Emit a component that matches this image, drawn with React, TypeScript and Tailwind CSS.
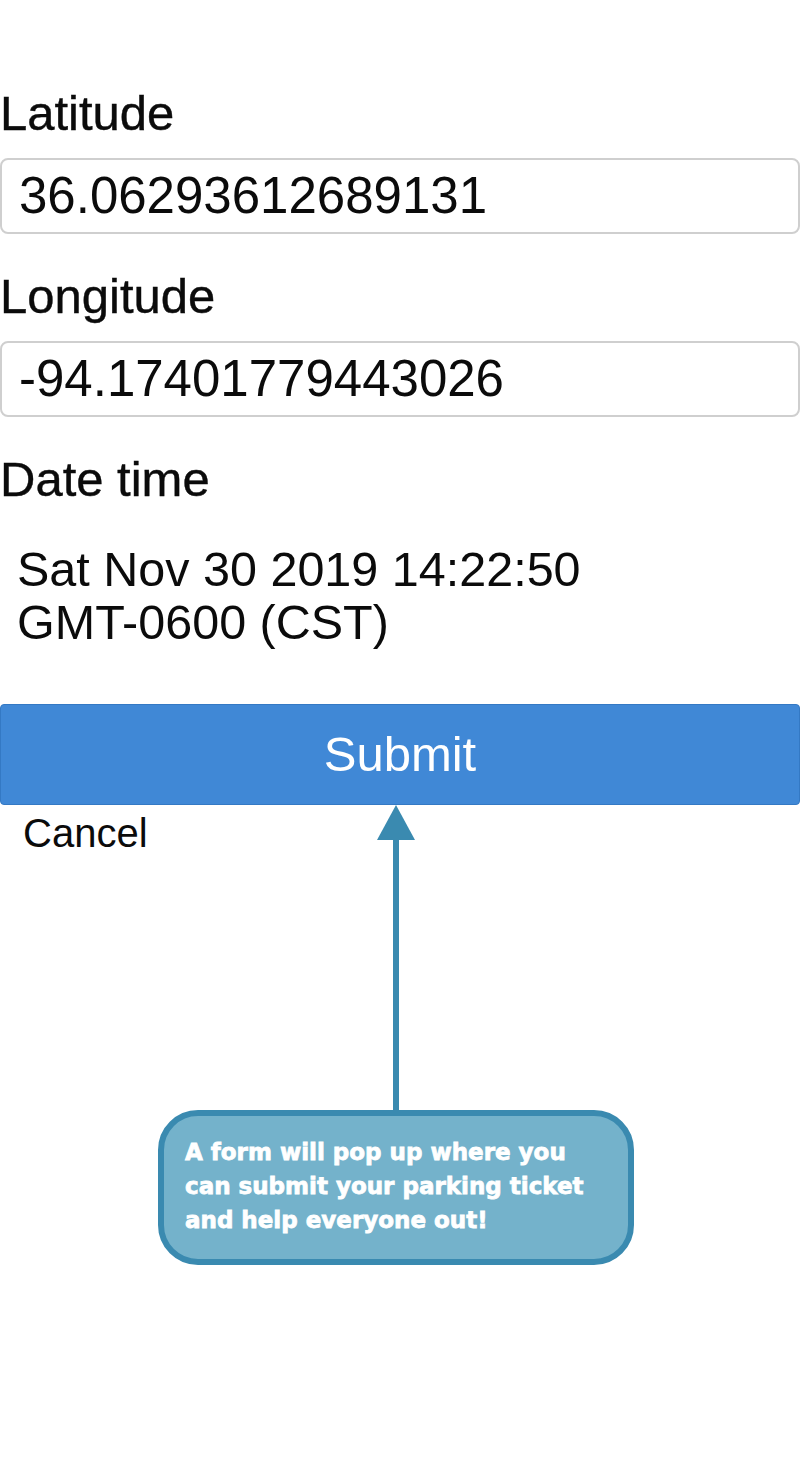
import React from "react";

function Field({ label, value }: { label: string; value: string }) {
  return (
    <div className="flex flex-col">
      <label className="text-[49px] leading-[56px] text-[#0b0b0b] mb-[17px] [-webkit-text-stroke:0.4px_#0b0b0b]">
        {label}
      </label>
      <div className="h-[76px] flex items-center pl-[17px] border-2 border-[#cfcfcf] rounded-[8px] bg-white text-[51px] text-[#0b0b0b]">
        {value}
      </div>
    </div>
  );
}

export default function App() {
  return (
    <div
      className="relative w-[800px] h-[1464px] bg-white overflow-hidden"
      style={{ fontFamily: '"Liberation Sans", Arial, sans-serif' }}
    >
      <div className="flex flex-col pt-[85px]">
        <Field label="Latitude" value="36.06293612689131" />
        <div className="mt-[34px]">
          <Field label="Longitude" value="-94.17401779443026" />
        </div>

        <div className="mt-[34px] text-[49px] leading-[56px] text-[#0b0b0b] [-webkit-text-stroke:0.4px_#0b0b0b]">
          Date time
        </div>
        <div className="mt-[36px] pl-[17px] text-[48.5px] leading-[53px] text-[#0b0b0b]">
          Sat Nov 30 2019 14:22:50
          <br />
          GMT-0600 (CST)
        </div>

        <button className="mt-[55px] h-[101px] w-full bg-[#4088d6] border border-[#3479c4] rounded-[4px] text-white text-[49px]">
          Submit
        </button>
        <div className="mt-[4px] pl-[23px] text-[40px] leading-[48px] text-[#0b0b0b]">Cancel</div>
      </div>

      {/* annotation arrow over the form */}
      <svg className="absolute left-[370px] top-[805px]" width="52" height="310" viewBox="0 0 52 310">
        <polygon points="26,0 7,35 45,35" fill="#3a8ab0" />
        <rect x="23" y="33" width="6" height="277" fill="#3a8ab0" />
      </svg>

      {/* annotation bubble */}
      <div className="absolute left-[158px] top-[1110px] w-[476px] h-[155px] border-[6px] border-[#3a8ab0] rounded-[40px] bg-[#74b2cb] pl-[21px] pt-[19px]">
        <p
          className="text-white font-bold text-[23px] leading-[34px] whitespace-nowrap [-webkit-text-stroke:0.8px_white]"
          style={{ fontFamily: '"DejaVu Sans", sans-serif' }}
        >
          A form will pop up where you
          <br />
          can submit your parking ticket
          <br />
          and help everyone out!
        </p>
      </div>
    </div>
  );
}
